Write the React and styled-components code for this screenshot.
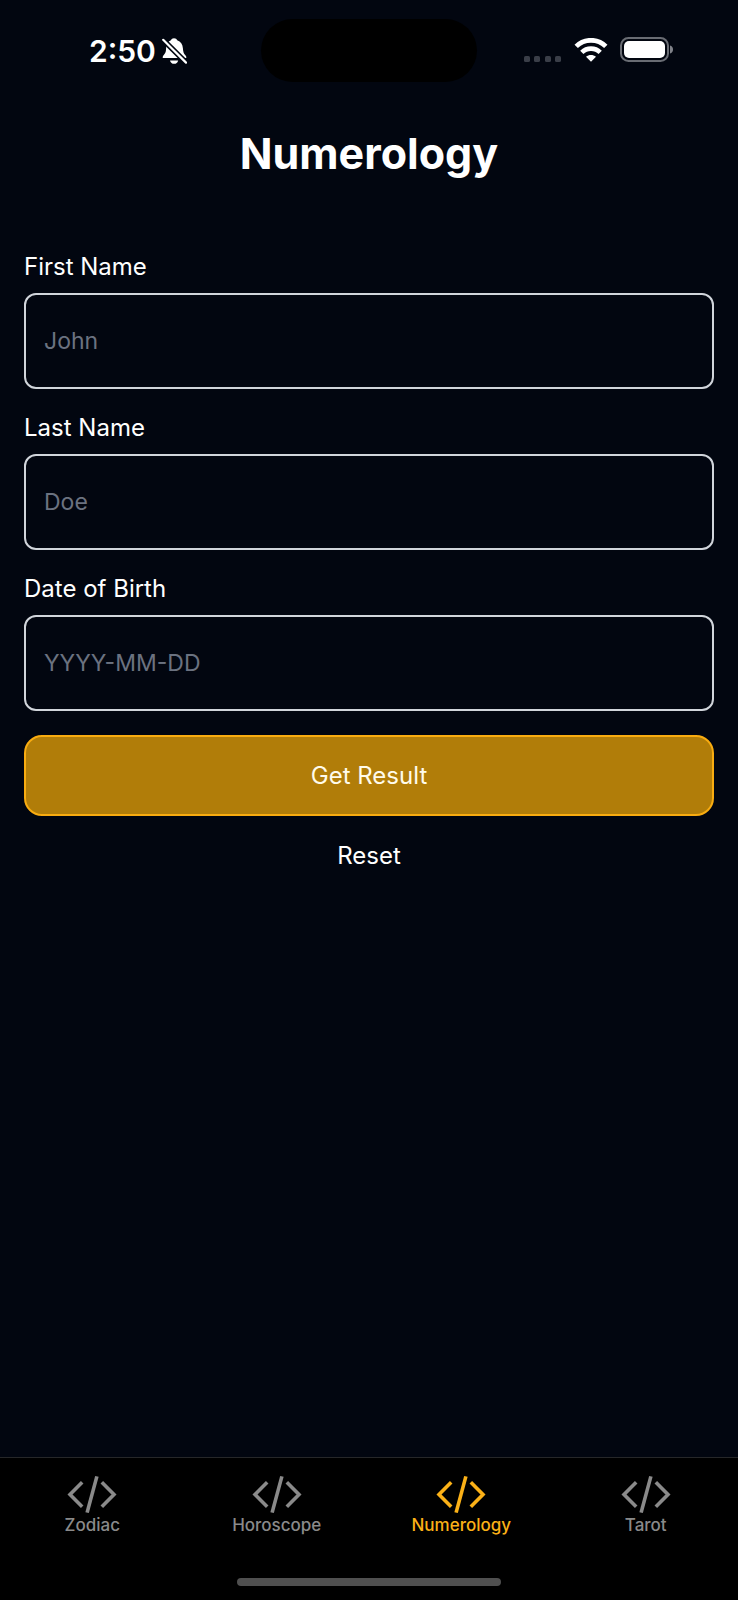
import React, { useState } from "react";
import styled, { createGlobalStyle } from "styled-components";

const GlobalStyle = createGlobalStyle`
  *, *::before, *::after { box-sizing: border-box; }
  body {
    margin: 0;
    background: #020610;
    color: #fff;
    font-family: Inter, "Liberation Sans", sans-serif;
  }
`;

const Screen = styled.div`
  display: flex;
  flex-direction: column;
  min-height: 100vh;
`;

const StatusBar = styled.div`
  display: grid;
  grid-template-columns: 1fr 216px 1fr;
  align-items: center;
  margin-top: 19px;
`;

const StatusLeft = styled.div`
  display: flex;
  align-items: center;
  gap: 6px;
  padding-left: 89px;
`;

const Time = styled.span`
  font-size: 30px;
  line-height: 36px;
  font-weight: 600;
`;

const Island = styled.div`
  height: 63px;
  border-radius: 32px;
  background: #000;
`;

const StatusRight = styled.div`
  display: flex;
  justify-content: flex-end;
  align-items: center;
  gap: 12px;
  padding: 0 64px 2px 0;
`;

const Main = styled.main`
  flex: 1;
  padding: 43px 24px 24px;
`;

const Title = styled.h1`
  margin: 0 0 71px;
  font-size: 43px;
  line-height: 56px;
  font-weight: 700;
  text-align: center;
`;

const Form = styled.form`
  display: flex;
  flex-direction: column;
  gap: 24px;
`;

const Field = styled.div`
  display: flex;
  flex-direction: column;
  gap: 12px;
`;

const Label = styled.label`
  font-size: 24px;
  line-height: 29px;
`;

const Input = styled.input`
  width: 100%;
  height: 96px;
  padding: 0 18px;
  border: 2px solid #d1d5db;
  border-radius: 12px;
  background: transparent;
  color: #fff;
  font: inherit;
  font-size: 23px;
  &::placeholder { color: #6b7280; opacity: 1; }
`;

const Actions = styled.div`
  display: flex;
  flex-direction: column;
  gap: 16px;
`;

const Button = styled.button`
  height: ${(p) => (p.$primary ? "81px" : "46px")};
  padding: 0;
  border: ${(p) => (p.$primary ? "2px solid #f9ac10" : "0")};
  border-radius: 18px;
  background: ${(p) => (p.$primary ? "#b17d09" : "transparent")};
  color: ${(p) => (p.$primary ? "#fffbeb" : "#fff")};
  font: inherit;
  font-size: 24px;
  cursor: pointer;
`;

const Footer = styled.footer`
  display: flex;
  flex-direction: column;
  align-items: center;
  gap: 43px;
  padding-bottom: 14px;
  border-top: 1px solid #262729;
  background: #000;
`;

const Tabs = styled.nav`
  display: grid;
  grid-template-columns: repeat(4, 1fr);
  width: 100%;
  padding-top: 16px;
`;

const Tab = styled.a`
  display: flex;
  flex-direction: column;
  align-items: center;
  color: ${(p) => (p.$active ? "#fbb117" : "#8a8a8a")};
  font-size: 17px;
  line-height: 20px;
  font-weight: 500;
  text-decoration: none;
`;

const HomeBar = styled.div`
  width: 264px;
  height: 8px;
  border-radius: 4px;
  background: #4f4f4f;
`;

const BellOff = () => (
  <svg width="25" height="28" viewBox="0 0 25 28" fill="#fff" aria-hidden="true">
    <path d="M12 1.2C13.6 1.2 14.8 2 15.2 3.3C18.8 4.4 20.6 7.4 20.9 11.2C21.1 14.8 21.7 16.4 23.4 18.3C24.2 19.3 24.4 20 24.3 21H0.8C0.5 19.7 1 18.8 2 17.7C3.7 15.8 4 14.2 4.1 11.2C4.3 7.2 5.7 4.4 8.9 3.3C9.4 2 10.4 1.2 12 1.2Z" />
    <path d="M8 23.4H16.2C15.6 25.6 14.2 26.8 12.1 26.8C10 26.8 8.6 25.6 8 23.4Z" />
    <path d="M1.2 2.8L24 25.6" stroke="#020610" strokeWidth="5.4" />
    <path d="M1.2 2.8L24 25.6" stroke="#fff" strokeWidth="2.2" strokeLinecap="round" />
  </svg>
);

const SignalDots = () => (
  <svg width="38" height="24" viewBox="0 0 38 24" fill="#3a3e48" aria-hidden="true">
    {[0, 10, 21, 31].map((x) => (
      <rect key={x} x={x} y="18" width="6" height="6" rx="1.6" />
    ))}
  </svg>
);

const Wifi = () => (
  <svg width="34" height="24" viewBox="0 0 34 24" fill="none" stroke="#fff" aria-hidden="true">
    <path d="M2.2 8.4A21 21 0 0 1 31.8 8.4" strokeWidth="4.8" />
    <path d="M7.8 14.4A13 13 0 0 1 26.2 14.4" strokeWidth="4.6" />
    <path d="M17 23.8L12 18.7C14.8 16.4 19.2 16.4 22 18.7Z" fill="#fff" stroke="none" />
  </svg>
);

const Battery = () => (
  <svg width="54" height="25" viewBox="0 0 54 25" aria-hidden="true">
    <rect x="1" y="1" width="47" height="23" rx="7.5" fill="none" stroke="#696c73" strokeWidth="2" />
    <rect x="4" y="4" width="41" height="17" rx="5" fill="#fff" />
    <path d="M50 8.5C52 9 53 10.5 53 12.5C53 14.5 52 16 50 16.5Z" fill="#808289" />
  </svg>
);

const CodeIcon = () => (
  <svg width="50" height="41" viewBox="0 0 50 41" fill="none" stroke="currentColor" strokeWidth="3.6" aria-hidden="true">
    <path d="M15.2 8.2L3 20.5L15.2 32.8" />
    <path d="M34.8 8.2L47 20.5L34.8 32.8" />
    <path d="M29.9 2.4L20.1 38.6" />
  </svg>
);

const fields = [
  { id: "firstName", label: "First Name", placeholder: "John" },
  { id: "lastName", label: "Last Name", placeholder: "Doe" },
  { id: "birthDate", label: "Date of Birth", placeholder: "YYYY-MM-DD" },
];

const tabs = ["Zodiac", "Horoscope", "Numerology", "Tarot"];

export default function App() {
  const [active, setActive] = useState("Numerology");

  return (
    <>
      <GlobalStyle />
      <Screen>
        <StatusBar>
          <StatusLeft>
            <Time>2:50</Time>
            <BellOff />
          </StatusLeft>
          <Island />
          <StatusRight>
            <SignalDots />
            <Wifi />
            <Battery />
          </StatusRight>
        </StatusBar>
        <Main>
          <Title>Numerology</Title>
          <Form onSubmit={(e) => e.preventDefault()}>
            {fields.map((f) => (
              <Field key={f.id}>
                <Label htmlFor={f.id}>{f.label}</Label>
                <Input id={f.id} name={f.id} type="text" placeholder={f.placeholder} />
              </Field>
            ))}
            <Actions>
              <Button type="submit" $primary>Get Result</Button>
              <Button type="reset">Reset</Button>
            </Actions>
          </Form>
        </Main>
        <Footer>
          <Tabs>
            {tabs.map((name) => (
              <Tab
                key={name}
                href={`#${name.toLowerCase()}`}
                $active={name === active}
                aria-current={name === active ? "page" : undefined}
                onClick={() => setActive(name)}
              >
                <CodeIcon />
                {name}
              </Tab>
            ))}
          </Tabs>
          <HomeBar />
        </Footer>
      </Screen>
    </>
  );
}
